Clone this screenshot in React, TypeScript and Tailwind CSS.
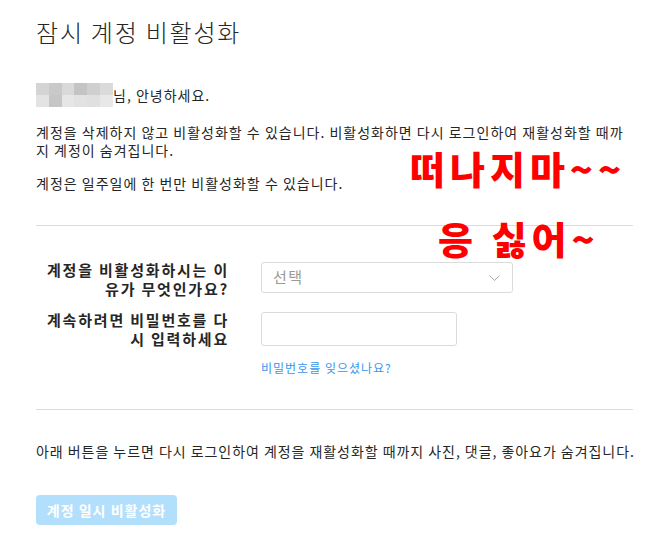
import React from "react";

const mosaic = [
  "#d4d4d4", "#c9c9c9", "#d9d9d9", "#c4c4c4", "#cfcfcf", "#dadada",
  "#e3e3e3", "#c6c6c6", "#e6e6e6", "#e2e2e2", "#e0e0e0", "#e8e8e8",
];

export default function App() {
  return (
    <div
      className="relative w-[652px] h-[537px] bg-white overflow-hidden text-[#262626]"
      style={{ fontFamily: '"Noto Sans CJK KR", "Noto Sans", sans-serif' }}
    >
      <div className="pl-[36px] pr-[19px] pt-[16px]">
        <h1 className="text-[24px] leading-[32px] font-light tracking-[1.8px]">잠시 계정 비활성화</h1>

        <div className="mt-[35px] flex items-center text-[14px] leading-[18px] tracking-[1px]">
          <span className="grid grid-cols-6 w-[77px] h-[24px]">
            {mosaic.map((c, i) => (
              <span key={i} className="block" style={{ backgroundColor: c }} />
            ))}
          </span>
          <span>님, 안녕하세요.</span>
        </div>

        <p className="mt-[16px] text-[14px] leading-[18px] tracking-[1px] whitespace-nowrap">
          계정을 삭제하지 않고 비활성화할 수 있습니다. 비활성화하면 다시 로그인하여 재활성화할 때까
          <br />지 계정이 숨겨집니다.
        </p>
        <p className="mt-[15px] text-[14px] leading-[18px] tracking-[1px]">계정은 일주일에 한 번만 비활성화할 수 있습니다.</p>

        <div className="mt-[33px] h-px bg-[#dbdbdb]" />

        <div className="mt-[34px] flex items-start">
          <div className="w-[193px] text-right text-[15px] leading-[19px] font-bold tracking-[1.8px]">
            계정을 비활성화하시는 이<br />유가 무엇인가요?
          </div>
          <div className="ml-[32px] mt-[2px] w-[252px] h-[31px] border border-[#dbdbdb] rounded-[3px] flex items-center justify-between pl-[11px] pr-[12px] bg-white">
            <span className="text-[15px] text-[#999999] tracking-[1.5px]">선택</span>
            <svg width="11" height="6" viewBox="0 0 11 6" fill="none">
              <path d="M0.5 0.5 L5.5 5.5 L10.5 0.5" stroke="#a8a8a8" strokeWidth="1" />
            </svg>
          </div>
        </div>

        <div className="mt-[12px] flex items-center">
          <div className="w-[193px] text-right text-[15px] leading-[19px] font-bold tracking-[1.8px]">
            계속하려면 비밀번호를 다<br />시 입력하세요
          </div>
          <div className="ml-[32px] w-[196px] h-[34px] border border-[#dbdbdb] rounded-[3px] bg-white" />
        </div>
        <div className="mt-[12px] ml-[225px] text-[12px] leading-[16px] tracking-[1px] text-[#3897f0]">비밀번호를 잊으셨나요?</div>

        <div className="mt-[33px] h-px bg-[#dbdbdb]" />

        <p className="mt-[32px] text-[14px] leading-[18px] tracking-[0.95px] whitespace-nowrap">
          아래 버튼을 누르면 다시 로그인하여 계정을 재활성화할 때까지 사진, 댓글, 좋아요가 숨겨집니다.
        </p>

        <button className="mt-[35px] w-[141px] h-[30px] rounded-[4px] bg-[#b2dffc] text-white text-[14px] font-bold tracking-[1px]">
          계정 일시 비활성화
        </button>
      </div>

      <div className="absolute left-[410px] top-[142px] text-[38px] leading-[52px] font-black tracking-[5px] text-[#ff0000] whitespace-nowrap">
        떠나지마~~
      </div>
      <div className="absolute left-[438px] top-[212px] text-[38px] leading-[52px] font-black tracking-[5px] text-[#ff0000] whitespace-nowrap">
        응 싫어~
      </div>
    </div>
  );
}
